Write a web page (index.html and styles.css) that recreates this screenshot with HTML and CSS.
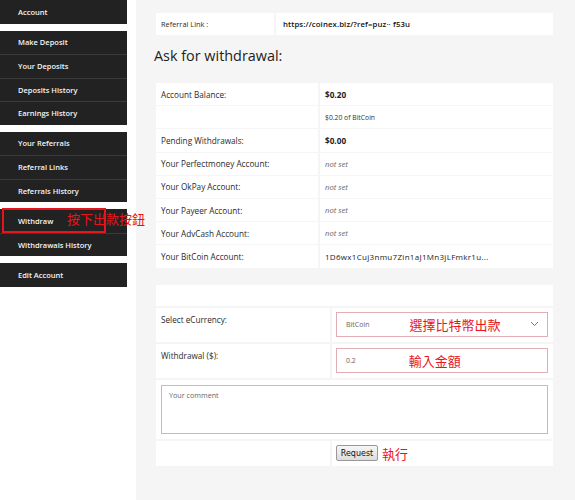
FILE: index.html
```html
<!DOCTYPE html>
<html>
<head>
<meta charset="utf-8">
<link rel="stylesheet" href="styles.css">
</head>
<body>
<div class="page">
  <nav class="sidebar">
    <div class="group"><a class="item">Account</a></div>
    <div class="group">
      <a class="item">Make Deposit</a>
      <a class="item">Your Deposits</a>
      <a class="item">Deposits History</a>
      <a class="item">Earnings History</a>
    </div>
    <div class="group">
      <a class="item">Your Referrals</a>
      <a class="item">Referral Links</a>
      <a class="item">Referrals History</a>
    </div>
    <div class="group">
      <a class="item">Withdraw</a>
      <a class="item">Withdrawals History</a>
    </div>
    <div class="group"><a class="item">Edit Account</a></div>
  </nav>
  <main class="main">
    <div class="grid ref">
      <div class="cell label small">Referral Link :</div>
      <div class="cell value link">https://coinex.biz/?ref=puz·· f53u</div>
    </div>
    <h2 class="title">Ask for withdrawal:</h2>
    <div class="grid info">
      <div class="cell label">Account Balance:</div>
      <div class="cell value strong">$0.20</div>
      <div class="cell label"></div>
      <div class="cell value tiny">$0.20 of BitCoin</div>
      <div class="cell label">Pending Withdrawals:</div>
      <div class="cell value strong">$0.00</div>
      <div class="cell label">Your Perfectmoney Account:</div>
      <div class="cell value unset">not set</div>
      <div class="cell label">Your OkPay Account:</div>
      <div class="cell value unset">not set</div>
      <div class="cell label">Your Payeer Account:</div>
      <div class="cell value unset">not set</div>
      <div class="cell label">Your AdvCash Account:</div>
      <div class="cell value unset">not set</div>
      <div class="cell label">Your BitCoin Account:</div>
      <div class="cell value addr">1D6wx1Cuj3nmu7Zin1aJ1Mn3jLFmkr1u...</div>
    </div>
    <div class="grid form">
      <div class="cell empty wide"></div>
      <div class="cell flabel">Select eCurrency:</div>
      <div class="cell fvalue">
        <div class="field select">
          <span class="ftext">BitCoin</span>
          <span class="mark mark-select">選擇比特幣出款</span>
          <svg class="chev" width="9" height="6" viewBox="0 0 9 6"><polyline points="1,1 4.5,4.5 8,1" fill="none" stroke="#777" stroke-width="1"/></svg>
        </div>
      </div>
      <div class="cell flabel">Withdrawal ($):</div>
      <div class="cell fvalue">
        <div class="field input">
          <span class="ftext">0.2</span>
          <span class="mark mark-input">輸入金額</span>
        </div>
      </div>
      <div class="cell wide comment">
        <div class="textarea">Your comment</div>
      </div>
      <div class="cell"></div>
      <div class="cell fvalue submit">
        <button class="btn">Request</button>
        <span class="mark mark-btn">執行</span>
      </div>
    </div>
  </main>
</div>
<div class="note-box"></div>
<span class="note-text">按下出款按鈕</span>
</body>
</html>
```
FILE: styles.css
```css
html, body {
  margin: 0;
  padding: 0;
  background: #fff;
}
body {
  position: relative;
  font-family: "Open Sans", "Noto Sans CJK TC", sans-serif;
  color: #333;
}
.page {
  display: flex;
  width: 575px;
  min-height: 500px;
}
.sidebar {
  width: 127px;
  margin-right: 9px;
  display: flex;
  flex-direction: column;
  gap: 7px;
}
.group {
  background: #222;
  display: flex;
  flex-direction: column;
}
.item {
  height: 23.5px;
  box-sizing: border-box;
  display: flex;
  align-items: center;
  padding-left: 18px;
  color: #f4f4f4;
  font-size: 7.5px;
  font-weight: 600;
  border-top: 1px solid #3a3a3a;
}
.group .item:first-child { border-top: none; }
.main {
  flex: 1;
  background: #f5f5f5;
  padding: 13px 22px 0 20px;
}
.grid {
  display: grid;
  column-gap: 2px;
}
.cell {
  background: #fff;
  display: flex;
  align-items: center;
  box-sizing: border-box;
}
.ref {
  grid-template-columns: 118px 1fr;
  height: 22px;
}
.label {
  padding-left: 5px;
  font-size: 8.2px;
  color: #2a2a2a;
}
.small { font-size: 7.4px; }
.value { padding-left: 5px; }
.link {
  padding-left: 7px;
  font-size: 7.8px;
  font-weight: 600;
  color: #111;
  letter-spacing: 0.1px;
}
.title {
  margin: 11px 0 0 -2px;
  height: 37px;
  font-size: 14.4px;
  font-weight: 400;
  line-height: 20px;
  color: #222;
}
.info {
  grid-template-columns: 162px 1fr;
  grid-auto-rows: 22.2px;
  row-gap: 1px;
}
.strong {
  font-size: 8.2px;
  font-weight: 700;
  color: #222;
}
.tiny { font-size: 6.8px; }
.unset {
  font-size: 7.6px;
  font-style: italic;
  color: #666;
}
.addr {
  font-size: 8px;
  color: #222;
  letter-spacing: 0.3px;
}
.form {
  margin-top: 17px;
  grid-template-columns: 174px 1fr;
  grid-template-rows: 21px 34px 34px 59px 25px;
  row-gap: 2px;
  margin-bottom: 33px;
}
.wide { grid-column: 1 / 3; }
.flabel {
  align-items: flex-start;
  padding: 6px 0 0 5px;
  font-size: 8.2px;
  color: #2a2a2a;
}
.fvalue {
  align-items: flex-start;
  padding: 4px 5px 0 4px;
}
.field {
  position: relative;
  height: 25px;
  width: 100%;
  box-sizing: border-box;
  border: 1px solid #e3aeb3;
  background: #fff;
  display: flex;
  align-items: center;
  padding-left: 9px;
}
.ftext {
  font-size: 7px;
  color: #666;
}
.mark {
  color: #e8141c;
  font-family: "Noto Sans CJK TC", sans-serif;
  font-size: 13px;
  line-height: 1;
}
.mark-select { margin-left: 40px; }
.mark-input { margin-left: 53px; }
.chev {
  margin-left: auto;
  margin-right: 8px;
}
.comment {
  padding: 5px;
  align-items: stretch;
}
.textarea {
  flex: 1;
  border: 1px solid #e3aeb3;
  padding: 4px 7px;
  font-size: 7.2px;
  color: #666;
}
.submit {
  align-items: center;
  padding-top: 0;
  gap: 4px;
}
.btn {
  height: 16px;
  width: 42px;
  padding: 0;
  border: 1px solid #999;
  border-radius: 2px;
  background: linear-gradient(#f6f6f6, #dcdcdc);
  font-family: "DejaVu Sans", sans-serif;
  font-size: 8px;
  color: #111;
}
.mark-btn { margin-left: 0; }
.note-box {
  position: absolute;
  left: 2px;
  top: 208px;
  width: 100px;
  height: 21px;
  border: 2px solid #e8141c;
}
.note-text {
  position: absolute;
  left: 67px;
  top: 212px;
  color: #e8141c;
  font-family: "Noto Sans CJK TC", sans-serif;
  font-size: 13px;
  line-height: 1;
}
```
